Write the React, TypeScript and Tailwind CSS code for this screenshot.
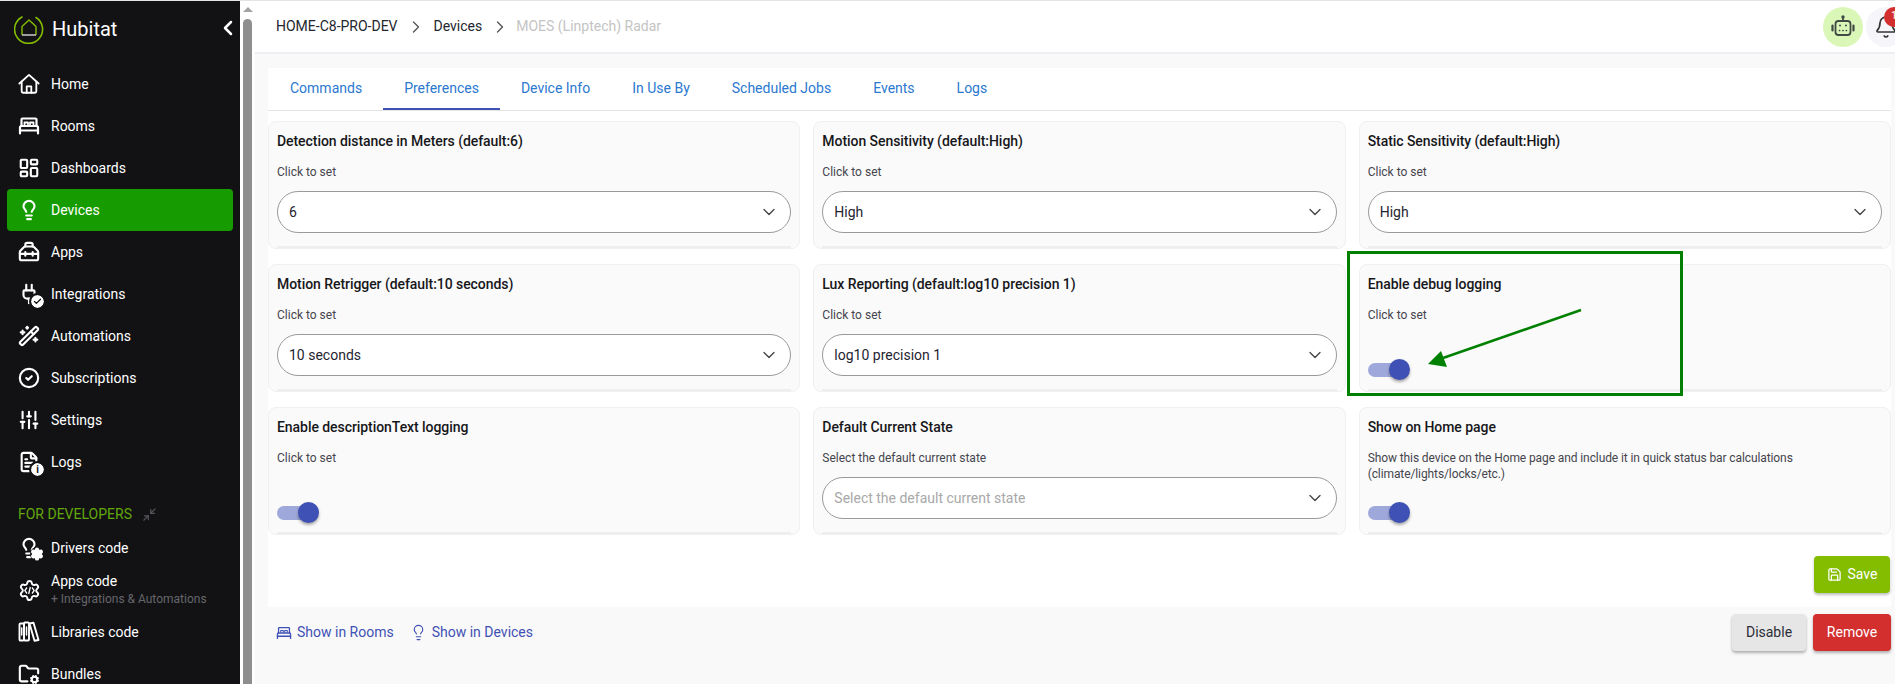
import React from "react";
import {
  LayoutDashboard, Lightbulb, Toolbox, Plug, WandSparkles, CircleCheck,
  SlidersVertical, FileText, Minimize2, Settings, FolderCog, ChevronLeft, ChevronRight,
  ChevronDown, Bell, Save, Check,
} from "lucide-react";

const font = { fontFamily: "Roboto, sans-serif" };

function HomeIcon() {
  return (
    <svg width="24" height="24" viewBox="0 0 24 24" fill="none" stroke="currentColor" strokeWidth="2" strokeLinejoin="round" strokeLinecap="round">
      <path d="M1.5 11.5L12 2l10.5 9.5" />
      <path d="M4 10v10a1.5 1.5 0 0 0 1.5 1.5h13A1.5 1.5 0 0 0 20 20V10" />
      <path d="M9.5 21.5V14.5h5v7" />
    </svg>
  );
}

function BedIcon({ size = 22, sw = 2.2 }: { size?: number; sw?: number }) {
  return (
    <svg width={size} height={size} viewBox="0 0 22 22" fill="none" stroke="currentColor" strokeWidth={sw} strokeLinejoin="round" strokeLinecap="round">
      <path d="M3.5 11V4.5a1 1 0 0 1 1-1h13a1 1 0 0 1 1 1V11" />
      <path d="M6.5 9.5V7.5h3.5v2M12 9.5V7.5h3.5v2" strokeWidth={sw * 0.8} />
      <path d="M2 18.5V12.5a1.5 1.5 0 0 1 1.5-1.5h15a1.5 1.5 0 0 1 1.5 1.5v6" />
      <path d="M2 15.5h18" />
    </svg>
  );
}

function BooksIcon() {
  return (
    <svg width="22" height="22" viewBox="0 0 22 22" fill="none" stroke="currentColor" strokeWidth="1.9" strokeLinejoin="round" strokeLinecap="round">
      <rect x="1.5" y="2.5" width="4.5" height="17" rx="1" />
      <rect x="6" y="1.5" width="5" height="18" rx="1" />
      <path d="M11.5 2.5l4-.8L20.5 19l-4 .8z" />
      <path d="M3.7 7v7M8.5 6v8" strokeWidth="1.5" />
    </svg>
  );
}

function AppsCodeIcon() {
  return (
    <span className="relative flex items-center justify-center">
      <Settings size={23} strokeWidth={2} className="[&>circle]:hidden" />
      <svg className="absolute" width="11" height="9" viewBox="0 0 11 9" fill="none" stroke="currentColor" strokeWidth="1.3">
        <path d="M3 1.5L.8 4.5 3 7.5M8 1.5l2.2 3L8 7.5M6.3 1L4.7 8" />
      </svg>
    </span>
  );
}

function RobotIcon() {
  return (
    <svg width="26" height="26" viewBox="0 0 26 26" fill="none" stroke="#3f4a45" strokeWidth="1.8" strokeLinecap="round" strokeLinejoin="round">
      <rect x="5.5" y="7" width="15" height="14" rx="3" />
      <path d="M13 7V4" />
      <circle cx="13" cy="3" r="0.8" fill="#3f4a45" />
      <path d="M2.5 11.5v5M23.5 11.5v5" strokeWidth="2.2" />
      <circle cx="10" cy="11.5" r="1" fill="#3f4a45" stroke="none" />
      <circle cx="16" cy="11.5" r="1" fill="#3f4a45" stroke="none" />
      <path d="M9.5 16.5h.1M12.9 16.5h.1M16.3 16.5h.1" strokeWidth="1.7" />
    </svg>
  );
}

function Badge({ kind }: { kind: "check" | "info" | "gear" }) {
  if (kind === "gear") {
    return (
      <span className="absolute -right-[4px] -bottom-[2px] flex items-center justify-center bg-[#121215] rounded-full">
        <Settings size={14} strokeWidth={2.6} fill="#ffffff" className="text-white" />
      </span>
    );
  }
  return (
    <span className="absolute -right-[4px] -bottom-[3px] w-[13px] h-[13px] rounded-full bg-white outline-2 outline-[#121215] flex items-center justify-center text-[#121215]">
      {kind === "check" && <Check size={9} strokeWidth={3.5} />}
      {kind === "info" && <span className="text-[10px] leading-none font-bold">i</span>}
    </span>
  );
}

function NavItem({ icon, label, sub, active, badge }: { icon: React.ReactNode; label: string; sub?: string; active?: boolean; badge?: "check" | "info" | "gear" }) {
  return (
    <div className={`h-[42px] mx-[7px] pl-[11px] flex items-center gap-[11px] rounded-[4px] ${active ? "bg-[#169c00]" : ""}`}>
      <span className="relative w-[22px] h-[22px] flex items-center justify-center text-white shrink-0">
        {icon}
        {badge && <Badge kind={badge} />}
      </span>
      <div className="flex flex-col">
        <span className="text-[14px] leading-[18px] text-white">{label}</span>
        {sub && <span className="text-[12px] leading-[18px] text-[#66666a]">{sub}</span>}
      </div>
    </div>
  );
}

function Sidebar() {
  const s = { size: 22, strokeWidth: 2.3 };
  return (
    <aside className="w-[240px] shrink-0 bg-[#121215] flex flex-col overflow-hidden">
      <div className="h-[62px] pl-[14px] pr-0 pb-[6px] flex items-center justify-between shrink-0">
        <div className="flex items-center gap-[8px]">
          <svg width="30" height="30" viewBox="0 0 30 30" fill="none">
            <path d="M22 3.5A14 14 0 1 1 8 3" stroke="#84bd00" strokeWidth="1.6" strokeLinecap="round" />
            <path d="M8 21V12.5L15 6l7 6.5V21" stroke="#84bd00" strokeWidth="1.4" strokeLinejoin="round" />
            <path d="M8 21h14" stroke="#d8d8d8" strokeWidth="1.4" />
          </svg>
          <span className="text-white text-[20px] leading-none">Hubitat</span>
        </div>
        <ChevronLeft size={24} strokeWidth={2.5} className="text-white -mt-[2px]" />
      </div>
      <nav className="flex flex-col">
        <NavItem icon={<HomeIcon />} label="Home" />
        <NavItem icon={<BedIcon />} label="Rooms" />
        <NavItem icon={<LayoutDashboard {...s} />} label="Dashboards" />
        <NavItem active icon={<Lightbulb {...s} />} label="Devices" />
        <NavItem icon={<Toolbox {...s} />} label="Apps" />
        <NavItem icon={<Plug {...s} />} label="Integrations" badge="check" />
        <NavItem icon={<WandSparkles {...s} />} label="Automations" />
        <NavItem icon={<CircleCheck {...s} />} label="Subscriptions" />
        <NavItem icon={<SlidersVertical {...s} />} label="Settings" />
        <NavItem icon={<FileText {...s} />} label="Logs" badge="info" />
      </nav>
      <div className="mt-[20px] h-[22px] pl-[18px] flex items-center gap-[10px] shrink-0">
        <span className="text-[14px] text-[#62a80a]">FOR DEVELOPERS</span>
        <Minimize2 size={15} className="text-[#55555a]" />
      </div>
      <nav className="flex flex-col mt-[2px]">
        <NavItem icon={<Lightbulb {...s} />} label="Drivers code" badge="gear" />
        <NavItem icon={<AppsCodeIcon />} label="Apps code" sub="+ Integrations & Automations" />
        <NavItem icon={<BooksIcon />} label="Libraries code" />
        <NavItem icon={<FolderCog {...s} />} label="Bundles" />
      </nav>
    </aside>
  );
}

function Scrollbar() {
  return (
    <div className="w-[15px] shrink-0 bg-white px-[3px] flex flex-col items-center">
      <div className="mt-[6px] w-0 h-0 border-l-[5px] border-r-[5px] border-b-[5px] border-l-transparent border-r-transparent border-b-[#a3a3a3]" />
      <div className="mt-[7px] w-[9px] flex-1 bg-[#8e8e8e] rounded-t-[5px]" />
    </div>
  );
}

function Toggle() {
  return (
    <div className="relative w-[42px] h-[21px] flex items-center">
      <div className="w-[40px] h-[14px] rounded-full bg-[#9fa8da]" />
      <div className="absolute right-0 top-0 w-[21px] h-[21px] rounded-full bg-[#3f51b5] shadow-[0_2px_3px_rgba(0,0,0,0.35)]" />
    </div>
  );
}

function SelectBox({ value, placeholder }: { value: string; placeholder?: boolean }) {
  return (
    <div className="h-[42px] rounded-full border border-[#9a9a9a] bg-white flex items-center justify-between pl-[11px] pr-[11px]">
      <span className={`text-[14px] ${placeholder ? "text-[#a8a8a8]" : "text-[#1f2430]"}`}>{value}</span>
      <ChevronDown size={20} strokeWidth={1.6} className="text-[#444]" />
    </div>
  );
}

function Card({ title, desc, children }: { title: string; desc: React.ReactNode; children: React.ReactNode }) {
  return (
    <div className="h-[128px] rounded-[8px] border border-[#f0f0f0] bg-[#fafafa] flex flex-col px-[8px]">
      <div className="mt-[9px] h-[20px] text-[14px] leading-[20px] font-medium text-[#17171a] tracking-[-0.06px]">{title}</div>
      <div className="mt-[13px] h-[32px] text-[12px] leading-[16px] text-[#45454d]">{desc}</div>
      <div className="-mt-[5px]">{children}</div>
      <div className="mt-auto h-[2px] bg-[#eeeeee]" />
    </div>
  );
}

function Tab({ label, active }: { label: string; active?: boolean }) {
  return (
    <div className={`h-[42px] px-[21px] flex items-center text-[14px] text-[#2b78d0] border-b-2 ${active ? "border-[#3f51b5]" : "border-transparent"}`}>
      {label}
    </div>
  );
}

export default function App() {
  return (
    <div className="relative w-[1895px] h-[684px] overflow-hidden flex flex-col bg-white" style={font}>
      <div className="h-px bg-[#e4e4e4] shrink-0" />
      <div className="flex-1 flex min-h-0">
        <Sidebar />
        <Scrollbar />
        <main className="flex-1 min-w-0 bg-[#f9f9f9] flex flex-col">
          <header className="h-[53px] shrink-0 bg-white border-b-2 border-[#eeeef3] flex items-center justify-between pl-[21px] overflow-hidden">
            <div className="flex items-center text-[14px]">
              <span className="text-[#22262e]">HOME-C8-PRO-DEV</span>
              <ChevronRight size={20} strokeWidth={1.6} className="text-[#555] ml-[8px] mr-[8px]" />
              <span className="text-[#22262e]">Devices</span>
              <ChevronRight size={20} strokeWidth={1.6} className="text-[#555] ml-[8px] mr-[6px]" />
              <span className="text-[#c4c4c4]">MOES (Linptech) Radar</span>
            </div>
            <div className="flex items-center gap-[3px] -mr-[11px] shrink-0">
              <div className="w-[40px] h-[40px] rounded-full bg-[#daf7b8] flex items-center justify-center">
                <RobotIcon />
              </div>
              <div className="relative w-[40px] h-[40px] rounded-full bg-[#f5f5fa] flex items-center justify-center">
                <Bell size={24} strokeWidth={1.7} className="text-[#333]" />
                <span className="absolute left-[18px] top-[0px] w-[20px] h-[20px] rounded-full bg-[#d32f2f] text-white text-[11px] flex items-center justify-center">1</span>
              </div>
            </div>
          </header>
          <section className="ml-[13px] mr-[4px] mt-[14px] h-[539px] bg-white flex flex-col shrink-0">
            <div className="flex border-b border-[#e4e4e4] h-[43px] shrink-0 pl-[1px]">
              <Tab label="Commands" />
              <Tab label="Preferences" active />
              <Tab label="Device Info" />
              <Tab label="In Use By" />
              <Tab label="Scheduled Jobs" />
              <Tab label="Events" />
              <Tab label="Logs" />
            </div>
            <div className="mt-[10px] grid grid-cols-3 gap-x-[13px] gap-y-[15px]">
              <Card title="Detection distance in Meters (default:6)" desc="Click to set"><SelectBox value="6" /></Card>
              <Card title="Motion Sensitivity (default:High)" desc="Click to set"><SelectBox value="High" /></Card>
              <Card title="Static Sensitivity (default:High)" desc="Click to set"><SelectBox value="High" /></Card>
              <Card title="Motion Retrigger (default:10 seconds)" desc="Click to set"><SelectBox value="10 seconds" /></Card>
              <Card title="Lux Reporting (default:log10 precision 1)" desc="Click to set"><SelectBox value="log10 precision 1" /></Card>
              <Card title="Enable debug logging" desc="Click to set"><div className="mt-[25px]"><Toggle /></div></Card>
              <Card title="Enable descriptionText logging" desc="Click to set"><div className="mt-[25px]"><Toggle /></div></Card>
              <Card title="Default Current State" desc="Select the default current state"><SelectBox value="Select the default current state" placeholder /></Card>
              <Card
                title="Show on Home page"
                desc={<span className="tracking-[-0.1px]">Show this device on the Home page and include it in quick status bar calculations<br />(climate/lights/locks/etc.)</span>}
              >
                <div className="mt-[25px]"><Toggle /></div>
              </Card>
            </div>
            <div className="mt-[21px] mr-[1px] flex justify-end">
              <button className="w-[76px] h-[37px] rounded-[4px] bg-[#84bd00] text-white text-[14px] flex items-center justify-center gap-[6px] shadow-[0_2px_3px_rgba(0,0,0,0.25)]">
                <Save size={15} />
                Save
              </button>
            </div>
          </section>
          <div className="ml-[21px] mr-[4px] mt-[7px] flex items-center justify-between">
            <div className="flex items-center text-[14px] text-[#3f51b5]">
              <BedIcon size={16} sw={1.8} />
              <span className="ml-[5px]">Show in Rooms</span>
              <Lightbulb size={17} strokeWidth={1.6} className="ml-[16px]" />
              <span className="ml-[5px]">Show in Devices</span>
            </div>
            <div className="flex items-center gap-[7px]">
              <button className="w-[74px] h-[37px] rounded-[4px] bg-[#e6e6e6] text-[#2c2f38] text-[14px] shadow-[0_2px_3px_rgba(0,0,0,0.3)]">Disable</button>
              <button className="w-[78px] h-[37px] rounded-[4px] bg-[#d32f2f] text-white text-[14px] shadow-[0_2px_3px_rgba(0,0,0,0.3)]">Remove</button>
            </div>
          </div>
        </main>
      </div>
      <svg className="absolute left-[1347px] top-[251px] pointer-events-none" width="336" height="145" viewBox="0 0 336 145" fill="none">
        <rect x="1.5" y="1.5" width="333" height="142" stroke="#008000" strokeWidth="3" />
        <path d="M234 59L96 107" stroke="#008000" strokeWidth="2.5" />
        <path d="M81 113L94 100L100 116Z" fill="#008000" />
      </svg>
    </div>
  );
}
